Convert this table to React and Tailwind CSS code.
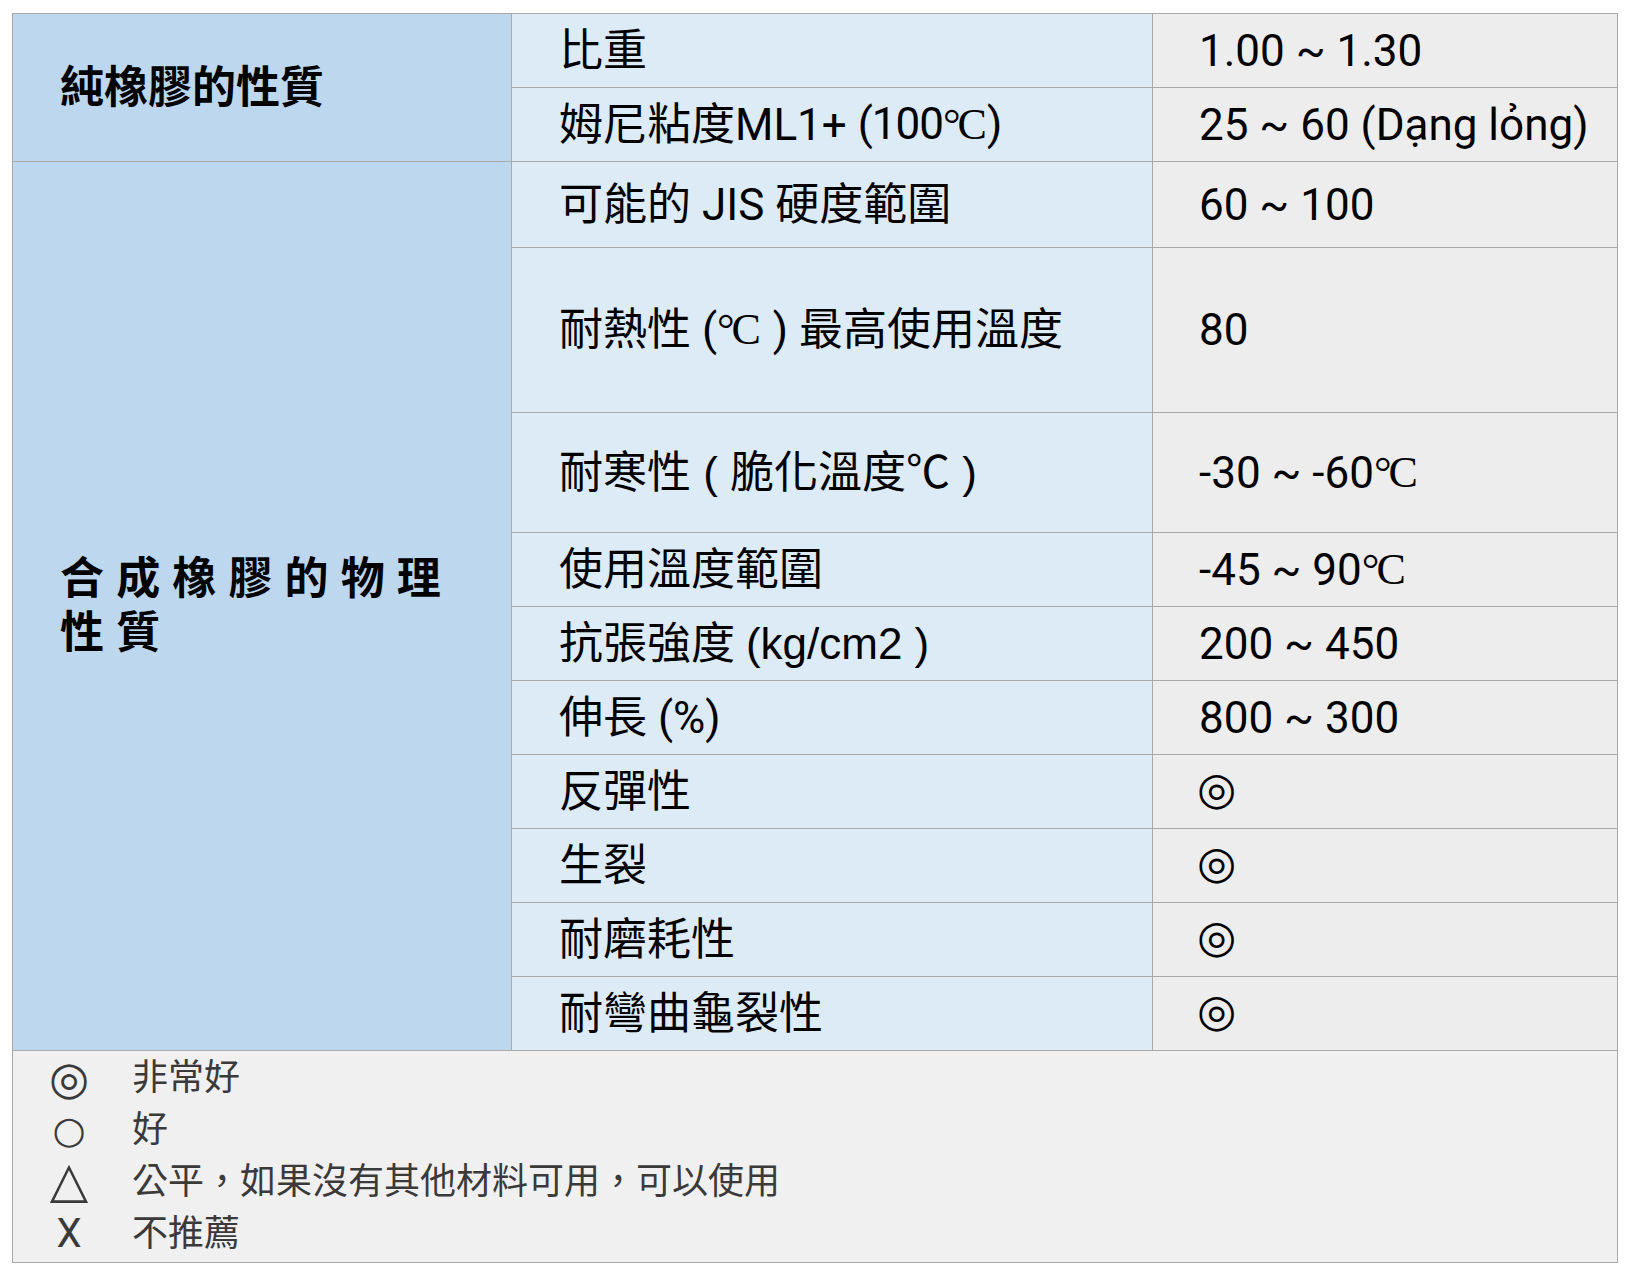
import React from 'react';

const Deg = () => (
  <span className="font-['Liberation_Serif',serif] tracking-[-3px]">
    °C
  </span>
);

const Ring = () => (
  <span className="-ml-[2px] pb-[7px] font-['DejaVu_Sans',sans-serif] text-[45px] font-bold leading-none">◎</span>
);

const rows = [
  { label: '比重', value: '1.00 ~ 1.30' },
  {
    label: (
      <>
        姆尼粘度ML1+{' '}
        <span className="tracking-[-1px]">
          (100<Deg />
          <span className="pl-[3px]">)</span>
        </span>
      </>
    ),
    value: '25 ~ 60 (Dạng lỏng)',
  },
  { label: '可能的 JIS 硬度範圍', value: '60 ~ 100' },
  {
    label: (
      <>
        耐熱性 (<Deg />
        <span className="pl-[4px]">{' ) '}</span>最高使用溫度
      </>
    ),
    value: '80',
  },
  {
    label: <span className="font-['Liberation_Sans','Noto_Sans_CJK_TC',sans-serif]">耐寒性 ( 脆化溫度℃ )</span>,
    value: (
      <>
        -30 ~ -60<Deg />
      </>
    ),
  },
  {
    label: '使用溫度範圍',
    value: (
      <>
        -45 ~ 90<Deg />
      </>
    ),
  },
  {
    label: (
      <>
        抗張強度{' '}
        <span className="font-['Liberation_Sans',sans-serif]">(kg/cm2 )</span>
      </>
    ),
    value: '200 ~ 450',
  },
  { label: '伸長 (%)', value: '800 ~ 300' },
  { label: '反彈性', value: <Ring /> },
  { label: '生裂', value: <Ring /> },
  { label: '耐磨耗性', value: <Ring /> },
  { label: '耐彎曲龜裂性', value: <Ring /> },
];

const legend = [
  { sym: '◎', cls: "font-['DejaVu_Sans',sans-serif] text-[46px]", text: '非常好' },
  { sym: '○', cls: "font-['DejaVu_Sans',sans-serif] text-[38px]", text: '好' },
  { sym: '△', cls: "font-['DejaVu_Sans',sans-serif] text-[50px] pb-[5px]", text: '公平，如果沒有其他材料可用，可以使用' },
  { sym: 'X', cls: "font-['Roboto',sans-serif] text-[40px]", text: '不推薦' },
];

export default function App() {
  return (
    <div className="min-h-screen bg-white pl-[12px] pt-[13px] font-['Roboto','Noto_Sans_CJK_TC',sans-serif] text-black">
      <div className="w-[1606px]">
        <div className="grid grid-cols-[498px_640px_464px] grid-rows-[73px_73px_85px_164px_119px_73px_73px_73px_73px_73px_73px_73px] gap-px bg-[#a9a9a9] p-px">
          <div className="col-start-1 row-start-1 row-span-2 flex items-center bg-[#bdd7ee] pl-[47px] text-[44px] font-bold">
            純橡膠的性質
          </div>
          <div className="col-start-1 row-start-3 row-span-10 flex items-center bg-[#bdd7ee] pl-[47px] pr-[44px] text-[44px] font-bold leading-[54px] tracking-[0.6px]">
            合 成 橡 膠 的 物 理 性 質
          </div>
          {rows.map((r, i) => (
            <React.Fragment key={i}>
              <div className="col-start-2 flex items-center bg-[#ddebf7] pl-[47px] text-[44px] whitespace-pre">
                {r.label}
              </div>
              <div className="col-start-3 flex items-center bg-[#ededed] pl-[46px] text-[44px] whitespace-pre">
                {r.value}
              </div>
            </React.Fragment>
          ))}
        </div>
        <div className="flex flex-col border-x border-b border-[#a9a9a9] bg-[#f0f0f0] pl-[26px] pt-[1px] pb-[2px]">
          {legend.map((l) => (
            <div key={l.text} className="flex h-[52px] items-center">
              <span className={`flex w-[60px] justify-center leading-none text-[#3a3a3a] ${l.cls}`}>{l.sym}</span>
              <span className="ml-[33px] text-[36px] text-[#3a3a3a]">{l.text}</span>
            </div>
          ))}
        </div>
      </div>
    </div>
  );
}
